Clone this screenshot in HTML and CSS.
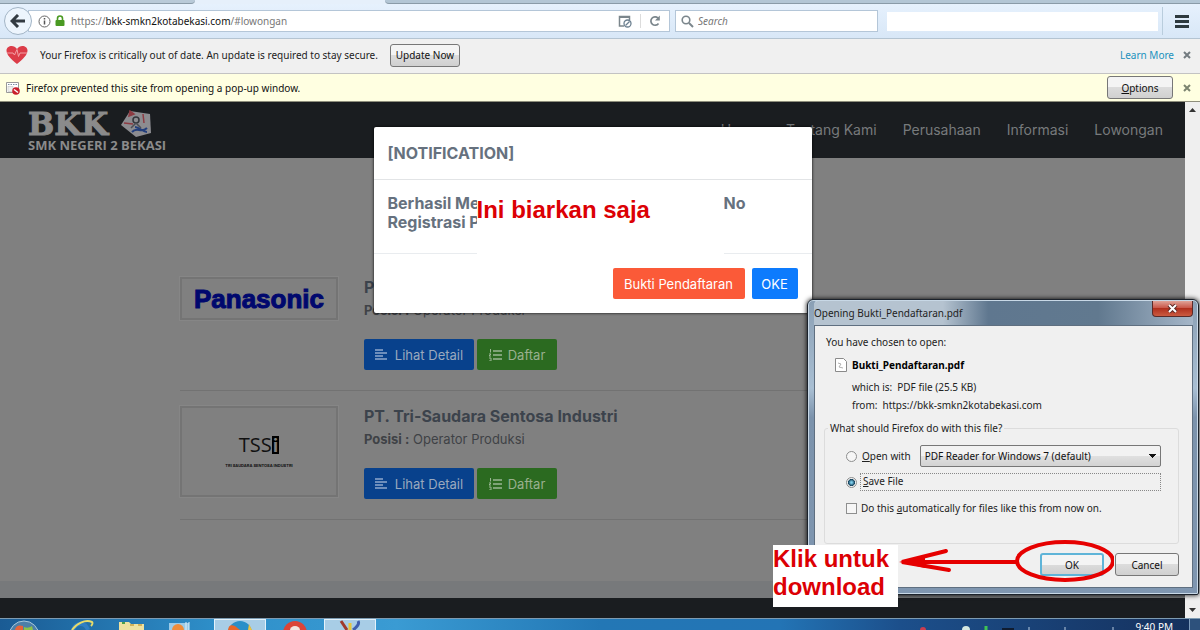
FILE: index.html
```
<!DOCTYPE html>
<html lang="id">
<head>
  <meta charset="UTF-8">
  <title>BKK SMK Negeri 2 Bekasi - Lowongan</title>
  <link rel="stylesheet" href="styles.css">
</head>
<body>
  <div class="tab-strip">
    <div class="tab-left"></div>
    <div class="tab-right"></div>
  </div>

  <header class="toolbar">
    <button class="back-btn" aria-label="Back">
      <svg width="16" height="14" viewBox="0 0 16 14"><path d="M8 1L2 7l6 6M2.500 7H15" fill="none" stroke="#333b42" stroke-width="3"/></svg>
    </button>
    <div class="url-bar">
      <svg width="13" height="13" viewBox="0 0 13 13"><circle cx="6.500" cy="6.500" r="5.500" fill="none" stroke="#666" stroke-width="1"/><path d="M6.500 5.500v4M6.500 3v1.500" stroke="#555" stroke-width="1.500"/></svg>
      <svg width="10" height="12" viewBox="0 0 10 12"><path d="M2.500 6V3.500a2.500 2.500 0 0 1 5 0V6" fill="none" stroke="#4a9a22" stroke-width="1.600"/><rect x="0.500" y="5" width="9" height="6" rx="1" fill="#4a9a22"/></svg>
      <span class="url">https://<b>bkk-smkn2kotabekasi.com</b>/#lowongan</span>
      <svg width="14" height="13" viewBox="0 0 14 13"><path d="M6 11H1.500V1.500h10V5" fill="none" stroke="#7b868c" stroke-width="1.500"/><path d="M1 2h11" stroke="#7b868c" stroke-width="2"/><circle cx="9.500" cy="8.500" r="3.500" fill="#fff" stroke="#6c8090" stroke-width="1.300"/><path d="M7.500 10.500l4-4" stroke="#6c8090" stroke-width="1.200"/></svg>
      <span class="divider"></span>
      <svg width="12" height="12" viewBox="0 0 12 12"><path d="M9.500 8.500A4.200 4.200 0 1 1 9 3" fill="none" stroke="#7b868c" stroke-width="1.700"/><path d="M10.800 0.500v5H6z" fill="#7b868c"/></svg>
    </div>
    <div class="search-bar">
      <svg width="13" height="13" viewBox="0 0 13 13"><circle cx="5" cy="5" r="3.800" fill="none" stroke="#7b868c" stroke-width="1.600"/><path d="M8 8l4 4" stroke="#7b868c" stroke-width="2"/></svg>
      <input type="search" placeholder="Search" aria-label="Search">
    </div>
    <div class="toolbar-blank"></div>
    <button class="menu-btn" aria-label="Menu"><span></span><span></span><span></span></button>
  </header>

  <div class="notice notice-update">
    <svg width="22" height="20" viewBox="0 0 22 20"><path d="M11 19C5 14 0.500 10 0.500 5.500 0.500 0.500 8 -1 11 4c3-5 10.500-3.500 10.500 1.500C21.500 10 17 14 11 19z" fill="#dc3c48"/><path d="M1 8h6l1.500 2L11 4.500l1.500 7L14 8h7" fill="none" stroke="#f3a0a5" stroke-width="1"/></svg>
    <span>Your Firefox is critically out of date. An update is required to stay secure.</span>
    <button class="win-btn">Update Now</button>
    <a class="learn-more" href="#">Learn More</a>
    <button class="close-btn" aria-label="Close"><svg width="8" height="8" viewBox="0 0 8 8"><path d="M1 1l6 6M7 1L1 7" stroke="#737b80" stroke-width="2"/></svg></button>
  </div>

  <div class="notice notice-popup">
    <svg width="14" height="14" viewBox="0 0 14 14"><path d="M0.500 1.500h12v10h-12z" fill="#fff" stroke="#999"/><path d="M2 3.500h9" stroke="#7a8da0" stroke-dasharray="1.500 1"/><rect x="2" y="5.500" width="5" height="5" fill="#eee" stroke="#bbb" stroke-width="0.500"/><circle cx="10" cy="10" r="3.800" fill="#c91f2c"/><path d="M8 8.500l4 3" stroke="#fff" stroke-width="1.400"/></svg>
    <span>Firefox prevented this site from opening a pop-up window.</span>
    <button class="win-btn options-btn"><u>O</u>ptions</button>
    <button class="close-btn" aria-label="Close"><svg width="8" height="8" viewBox="0 0 8 8"><path d="M1 1l6 6M7 1L1 7" stroke="#7c8470" stroke-width="2"/></svg></button>
  </div>

  <div class="viewport">
    <main class="page">
      <nav class="navbar">
        <a class="logo" href="#">
          <span class="logo-top">
            <span class="logo-name">BKK</span>
            <svg width="32" height="28" viewBox="0 0 32 28"><path d="M10 1l20 3 1 19-15 4L1 15z" fill="#8c8c90"/><path d="M10 1l4 3-5 2zM4 13l9 1" fill="#8d3b42" stroke="#8d3b42" stroke-width="1.500"/><path d="M23 4l1 9" stroke="#8d3b42" stroke-width="1.500"/><circle cx="16" cy="10" r="3" fill="none" stroke="#33363b" stroke-width="1.500"/><path d="M11 18l5-5 5 5" fill="none" stroke="#4b4e54" stroke-width="1.500"/><path d="M12 22c5-6 9 2 15-4M15 17c4 0 8 5 12 5" fill="none" stroke="#233f7c" stroke-width="2"/></svg>
          </span>
          <span class="logo-sub">SMK NEGERI 2 BEKASI</span>
        </a>
        <div class="nav-links">
          <a href="#">Home</a>
          <a href="#">Tentang Kami</a>
          <a href="#">Perusahaan</a>
          <a href="#">Informasi</a>
          <a href="#">Lowongan</a>
        </div>
      </nav>

      <section class="jobs">
        <article class="job">
          <div class="thumb"><span class="panasonic">Panasonic</span></div>
          <div class="job-info">
            <h2>PT. Panasonic</h2>
            <p><b>Posisi :</b> Operator Produksi</p>
            <div class="job-actions">
              <button class="btn btn-detail"><svg width="12" height="11" viewBox="0 0 12 11"><path d="M0 1h8M0 4h12M0 7h8M0 10h12" stroke="#8fa8cb" stroke-width="1.300"/></svg>Lihat Detail</button>
              <button class="btn btn-daftar"><svg width="13" height="12" viewBox="0 0 13 12"><path d="M4 2h9M4 6h9M4 10h9" stroke="#9bb794" stroke-width="1.400"/><path d="M1.500 0v3.500M0 5h2L0 7h2M0 9h2v3H0" fill="none" stroke="#9bb794"/></svg>Daftar</button>
            </div>
          </div>
        </article>
        <article class="job">
          <div class="thumb thumb-tall">
            <span class="tssi">TSS<i>i</i></span>
            <span class="tssi-sub">TRI SAUDARA SENTOSA INDUSTRI</span>
          </div>
          <div class="job-info">
            <h2>PT. Tri-Saudara Sentosa Industri</h2>
            <p><b>Posisi :</b> Operator Produksi</p>
            <div class="job-actions">
              <button class="btn btn-detail"><svg width="12" height="11" viewBox="0 0 12 11"><path d="M0 1h8M0 4h12M0 7h8M0 10h12" stroke="#8fa8cb" stroke-width="1.300"/></svg>Lihat Detail</button>
              <button class="btn btn-daftar"><svg width="13" height="12" viewBox="0 0 13 12"><path d="M4 2h9M4 6h9M4 10h9" stroke="#9bb794" stroke-width="1.400"/><path d="M1.500 0v3.500M0 5h2L0 7h2M0 9h2v3H0" fill="none" stroke="#9bb794"/></svg>Daftar</button>
            </div>
          </div>
        </article>
      </section>

      <div class="page-band"></div>
      <footer class="page-footer"></footer>

      <div class="modal" role="dialog" aria-label="Notification">
        <div class="modal-header">[NOTIFICATION]</div>
        <div class="modal-body">
          <span>Berhasil Me<br>Registrasi P</span>
          <span>No</span>
        </div>
        <div class="modal-footer">
          <button class="btn btn-bukti">Bukti Pendaftaran</button>
          <button class="btn btn-oke">OKE</button>
        </div>
        <div class="note note-modal">Ini biarkan saja</div>
      </div>
    </main>
    <div class="scrollbar">
      <svg width="7" height="4" viewBox="0 0 7 4"><path d="M0 4l3.500-4L7 4z" fill="#333"/></svg>
      <svg width="7" height="4" viewBox="0 0 7 4"><path d="M0 0l3.500 4L7 0z" fill="#333"/></svg>
    </div>
  </div>

  <div class="taskbar">
    <svg class="task-icon start" width="32" height="10" viewBox="0 0 32 10"><circle cx="16" cy="16" r="15" fill="#4d7fa8" stroke="#a9c9dd"/><path d="M7 10c1-5 5-5 8-4v4z" fill="#e8633a"/><path d="M16 7c3 1 5 1 8-1l1 4h-9z" fill="#8dc24a"/></svg>
    <svg class="task-icon" width="28" height="10" viewBox="0 0 28 10"><path d="M5 10C7 3 17 1 20 10" fill="none" stroke="#2f7fc4" stroke-width="4"/><path d="M4 10C8 4 17-1 24 2c1 1 0 3-1 4" fill="none" stroke="#e8dc6a" stroke-width="2"/></svg>
    <svg class="task-icon" width="28" height="9" viewBox="0 0 28 9"><path d="M1 1h10l2 2h13v6H1z" fill="#eee2a0"/><path d="M4 2h3" stroke="#4da04a" stroke-width="2"/><path d="M12 4h4M20 4h4" stroke="#d2b25a" stroke-width="2"/></svg>
    <svg class="task-icon" width="24" height="8" viewBox="0 0 24 8"><path d="M1 1h20v7H1z" fill="#9ccbe8"/><circle cx="10" cy="8" r="6" fill="#ef8c3a"/><path d="M18 0v8M21 0v8" stroke="#dff0fa"/></svg>
    <span class="task-tile"><svg width="26" height="9" viewBox="0 0 26 9"><circle cx="13" cy="12" r="12" fill="#2a8fc8"/><path d="M1 9C2 3 5 4 8 5l5 4z" fill="#e8662a"/><path d="M22 3l3 6h-4z" fill="#f0c23c"/></svg></span>
    <svg class="task-icon chrome" width="26" height="9" viewBox="0 0 26 9"><circle cx="13" cy="12" r="12" fill="#dc4438"/><path d="M8 9a5 4 0 0 1 10 0z" fill="#f3e5e2"/></svg>
    <span class="task-tile"><svg width="22" height="10" viewBox="0 0 22 10"><path d="M2 1l6 9" stroke="#a03a2c" stroke-width="3"/><path d="M11 3v7" stroke="#e8c53c" stroke-width="3"/><path d="M19 1c2 3-1 6-5 9" fill="none" stroke="#3f5fae" stroke-width="3"/></svg></span>
    <div class="tray">
      <svg width="200" height="4" viewBox="0 0 200 4"><circle cx="4" cy="4" r="3" fill="#cc3d50"/><circle cx="47" cy="4" r="4" fill="#d6e8e0"/><path d="M67 0v4" stroke="#3fc454" stroke-width="3"/><path d="M83 2h12v2H83z" fill="#101c30"/><path d="M110 1v3M146 1v3M194 1v3" stroke="#b8cbe0"/></svg>
      <span class="clock">9:40 PM</span>
      <span class="show-desktop"></span>
    </div>
  </div>

  <div class="dialog" role="dialog" aria-label="Opening Bukti_Pendaftaran.pdf">
    <div class="dialog-title">
      <span>Opening Bukti_Pendaftaran.pdf</span>
      <button class="dialog-close" aria-label="Close"><svg width="11" height="9" viewBox="0 0 11 9"><path d="M2 1l7 7M9 1L2 8" stroke="#5c2a26" stroke-width="4"/><path d="M2 1l7 7M9 1L2 8" stroke="#fff" stroke-width="2"/></svg></button>
    </div>
    <form class="dialog-body">
      <p>You have chosen to open:</p>
      <div class="file">
        <svg width="12" height="14" viewBox="0 0 12 14"><path d="M0.500 0.500h8l3 3v10h-11z" fill="#fff" stroke="#8a8a8a"/><path d="M3 5l3 1-2 3 4 1" fill="none" stroke="#b0b0b0"/></svg>
        <b>Bukti_Pendaftaran.pdf</b>
      </div>
      <div class="file-row"><span>which is:</span><span>PDF file (25.5 KB)</span></div>
      <div class="file-row"><span>from:</span><span>https://bkk-smkn2kotabekasi.com</span></div>
      <fieldset>
        <legend>What should Firefox do with this file?</legend>
        <div class="option">
          <input type="radio" name="action" id="open-with">
          <label for="open-with"><u>O</u>pen with</label>
          <select aria-label="Application"><option>PDF Reader for Windows 7 (default)</option></select>
        </div>
        <div class="option">
          <input type="radio" name="action" id="save-file" checked>
          <label class="focused" for="save-file"><u>S</u>ave File</label>
        </div>
        <div class="option option-auto">
          <input type="checkbox" id="auto">
          <label for="auto">Do this <u>a</u>utomatically for files like this from now on.</label>
        </div>
      </fieldset>
      <div class="dialog-actions">
        <button type="button" class="win-btn ok-btn">OK</button>
        <button type="button" class="win-btn cancel-btn">Cancel</button>
      </div>
    </form>
    <div class="note note-download">Klik untuk download</div>
    <svg class="arrow" width="216" height="44" viewBox="0 0 216 44"><ellipse cx="167" cy="22" rx="48" ry="19" fill="none" stroke="#e60000" stroke-width="4"/><path d="M119 23H12" stroke="#e60000" stroke-width="4"/><path d="M48 12L4 23l47 8" fill="none" stroke="#e60000" stroke-width="4" stroke-linecap="round"/><path d="M1 23l26-7v13z" fill="#e60000"/></svg>
  </div>
</body>
</html>
```
FILE: styles.css
```
* {
  margin: 0;
  padding: 0;
  box-sizing: border-box;
}

body {
  height: 100vh;
  display: flex;
  flex-direction: column;
  position: relative;
  overflow: hidden;
  font-family: "Noto Sans", "Open Sans", sans-serif;
  font-size: 10px;
  color: #222;
}

button,
input,
select {
  font: inherit;
}

svg {
  flex: none;
}

/* browser chrome */
.tab-strip {
  flex: none;
  height: 4px;
  display: flex;
  justify-content: space-between;
  background: #e6f0fb;
}

.tab-left {
  width: 195px;
  background: #b9cad8;
  border-bottom: 1px solid #8a9ba8;
  border-bottom-right-radius: 4px;
}

.tab-right {
  width: calc(100% - 385px);
  background: #b3c6d5;
  border-bottom: 1px solid #8a9ba8;
  border-bottom-left-radius: 4px;
}

.toolbar {
  flex: none;
  height: 35px;
  display: flex;
  align-items: center;
  padding-left: 4px;
  background: linear-gradient(#e6f1fd, #d8e7f7);
  border-bottom: 1px solid #b4c4d2;
}

.back-btn {
  flex: none;
  width: 28px;
  height: 28px;
  display: flex;
  align-items: center;
  justify-content: center;
  background: #edf5fd;
  border: 1px solid #a3b5c6;
  border-radius: 50%;
  z-index: 1;
}

.url-bar,
.search-bar {
  height: 22px;
  display: flex;
  align-items: center;
  background: #fff;
  border: 1px solid #b4c6d8;
}

.url-bar {
  flex: 1;
  gap: 4px;
  margin-left: -4px;
  padding: 0 8px 0 9px;
}

.url {
  flex: 1;
  margin-left: 2px;
  color: #777;
}

.url b {
  font-weight: normal;
  color: #111;
}

.divider {
  width: 1px;
  height: 14px;
  margin: 0 4px;
  background: #dcdcdc;
}

.search-bar {
  width: 203px;
  margin-left: 5px;
  padding-left: 5px;
  gap: 4px;
}

.search-bar input {
  width: 100%;
  border: none;
  background: none;
}

.search-bar input::placeholder {
  color: #777;
  font-style: italic;
}

.toolbar-blank {
  width: 271px;
  height: 19px;
  margin-left: 9px;
  background: #fff;
}

.menu-btn {
  width: 38px;
  height: 28px;
  margin-left: 4px;
  display: flex;
  flex-direction: column;
  align-items: center;
  justify-content: center;
  gap: 2px;
  background: none;
  border: none;
  border-left: 1px solid #b9cddd;
}

.menu-btn span {
  width: 14px;
  height: 3px;
  background: #2e3a3f;
}

.notice {
  flex: none;
  display: flex;
  align-items: center;
  padding: 0 9px 0 6px;
}

.notice-update {
  height: 35px;
  gap: 12px;
  padding-bottom: 2px;
  background: #f0f0f0;
  border-bottom: 1px solid #c3c3c3;
}

.notice-popup {
  height: 28px;
  gap: 6px;
  background: #ffffe1;
  border-bottom: 1px solid #8e8e7c;
  color: #111;
}

.win-btn {
  height: 23px;
  background: linear-gradient(#f4f4f4 50%, #dcdcdc 50%, #d0d0d0);
  border: 1px solid #777;
  border-radius: 3px;
  color: #111;
}

.notice-update .win-btn {
  width: 70px;
}

.options-btn {
  width: 66px;
  margin-left: auto;
}

.learn-more {
  margin-left: auto;
  color: #2190bd;
  text-decoration: none;
}

.close-btn {
  width: 8px;
  height: 20px;
  display: flex;
  align-items: center;
  background: none;
  border: none;
}

.notice-update .close-btn {
  margin-left: -3px;
}

.notice-popup .close-btn {
  margin-left: 4px;
}

/* web page */
.viewport {
  flex: 1;
  min-height: 0;
  display: flex;
}

.page {
  flex: 1;
  display: flex;
  flex-direction: column;
  position: relative;
  background: #808080;
  font-family: Inter, "Open Sans", sans-serif;
  font-size: 13px;
}

.navbar {
  height: 56px;
  display: flex;
  align-items: center;
  justify-content: space-between;
  padding: 0 22px 0 28px;
  background: #1a1d20;
}

.logo {
  display: flex;
  flex-direction: column;
  padding-top: 2px;
  color: #8b8b8b;
  text-decoration: none;
}

.logo-top {
  display: flex;
  align-items: center;
  gap: 12px;
  height: 28px;
}

.logo-name {
  font-family: "DejaVu Serif", serif;
  font-size: 31px;
  line-height: 28px;
  font-weight: bold;
  -webkit-text-stroke: 1px #8b8b8b;
}

.logo-sub {
  font-family: "Open Sans", sans-serif;
  font-size: 13px;
  line-height: 14px;
  font-weight: bold;
}

.nav-links {
  display: flex;
  gap: 26px;
  padding-bottom: 2px;
}

.nav-links a {
  color: #777a7c;
  font-size: 14px;
  text-decoration: none;
}

.jobs {
  flex: 1;
  padding: 104px 180px 0;
}

.job {
  display: flex;
  align-items: flex-start;
  gap: 26px;
  height: 129px;
  padding-top: 15px;
  border-bottom: 1px solid #727272;
}

.thumb {
  width: 158px;
  height: 43px;
  display: flex;
  flex-direction: column;
  align-items: center;
  justify-content: center;
  border: 2px solid #747474;
  outline: 1px solid #868686;
}

.thumb-tall {
  height: 91px;
}

.panasonic {
  font-family: "Liberation Sans", Arial, sans-serif;
  font-size: 26px;
  line-height: 30px;
  font-weight: bold;
  color: #00086e;
  -webkit-text-stroke: 1px #00086e;
}

.tssi {
  display: flex;
  align-items: center;
  font-family: "Open Sans", sans-serif;
  font-size: 20px;
  line-height: 20px;
  color: #111;
}

.tssi i {
  padding: 0 1px;
  background: #000;
  color: #808080;
  font-style: normal;
  font-weight: bold;
  font-size: 18px;
  line-height: 18px;
}

.tssi-sub {
  margin-top: 8px;
  font-size: 4px;
  line-height: 6px;
  font-weight: bold;
  color: #111;
}

.job-info h2 {
  font-size: 16px;
  line-height: 20px;
  font-weight: 700;
  color: #3c434c;
}

.job-info p {
  margin: 4px 0 20px;
  line-height: 18px;
  color: #3f4246;
}

.job-actions {
  display: flex;
  gap: 3px;
}

.btn {
  height: 31px;
  display: flex;
  align-items: center;
  justify-content: center;
  border: none;
  border-radius: 2px;
  color: #fff;
}

.btn-detail {
  width: 110px;
  gap: 8px;
  background: #08418c;
  color: #9aa9be;
}

.btn-daftar {
  width: 80px;
  gap: 6px;
  background: #2b6a20;
  color: #9ab08f;
}

.page-band {
  height: 17px;
  background: #77797b;
}

.page-footer {
  height: 20px;
  background: #1a1d20;
}

.modal {
  position: absolute;
  top: 25px;
  left: 0;
  right: 0;
  margin: 0 auto;
  width: 438px;
  background: #fff;
  border-radius: 2px;
  box-shadow: 0 0 3px #000;
  color: #66717e;
  font-size: 16px;
  font-weight: 700;
}

.modal-header {
  padding: 16px 14px;
  line-height: 20px;
  border-bottom: 1px solid #e2e4e6;
}

.modal-body {
  display: flex;
  justify-content: space-between;
  height: 74px;
  padding: 14px 66px 0 14px;
  line-height: 19px;
  border-bottom: 1px solid #e9ecef;
}

.modal-footer {
  display: flex;
  justify-content: flex-end;
  gap: 7px;
  padding: 14px;
}

.modal-footer .btn {
  font-size: 13px;
  font-weight: 400;
}

.btn-bukti {
  width: 132px;
  background: #fb5a38;
}

.btn-oke {
  width: 46px;
  background: #0d7bfd;
}

.note {
  position: absolute;
  background: #fff;
  color: #dc0004;
  font-family: "Liberation Sans", Arial, sans-serif;
  font-weight: bold;
  font-size: 24px;
  line-height: 28px;
}

.note-modal {
  left: 103px;
  top: 58px;
  width: 247px;
  height: 74px;
  padding-top: 11px;
}

.scrollbar {
  width: 15px;
  display: flex;
  flex-direction: column;
  align-items: center;
  justify-content: space-between;
  padding: 6px 0;
  background: #efefef;
}

/* taskbar */
.taskbar {
  flex: none;
  height: 12px;
  display: flex;
  align-items: flex-end;
  overflow: hidden;
  background: linear-gradient(90deg, #1a5b94, #2e8fc9 18%, #3a9bd3 33%, #2377b5 50%, #2374b5 65%, #1c4f8b 75%, #15305c);
  border-top: 1px solid #7d9bb2;
}

.task-icon {
  margin-right: 22px;
}

.start {
  margin: 0 28px 0 8px;
}

.task-tile {
  width: 52px;
  height: 11px;
  display: flex;
  align-items: flex-end;
  justify-content: center;
  background: #a8cde6;
  border: 1px solid #e3f2fb;
  border-bottom: none;
}

.chrome {
  margin: 0 16px;
}

.tray {
  margin-left: auto;
  display: flex;
  align-items: flex-end;
  gap: 16px;
  height: 11px;
}

.clock {
  height: 8px;
  line-height: 10px;
  color: #fff;
}

.show-desktop {
  width: 11px;
  height: 11px;
  background: #2d517c;
  border-left: 1px solid #7f9cbc;
}

/* download dialog */
.dialog {
  position: absolute;
  right: 1px;
  bottom: 35px;
  width: 392px;
  padding: 0 5px 6px 6px;
  background: linear-gradient(#8a9fb4, #a9bfd3 30%, #7c93ac 40%, #7f96b0);
  border: 1px solid #1b222b;
  border-radius: 6px 6px 2px 2px;
  box-shadow: inset 0 0 0 1px #c8d8e6, 0 0 5px #000;
  color: #222;
}

.dialog-title {
  height: 25px;
  display: flex;
  align-items: center;
  justify-content: space-between;
  background: linear-gradient(90deg, #b5c3d0 34%, #5f778f 46%, #61798f 75%, #a5b6c8);
  border-top: 1px solid #c8d8e6;
  border-radius: 5px 5px 0 0;
}

.dialog-close {
  align-self: flex-start;
  width: 41px;
  height: 16px;
  display: flex;
  align-items: center;
  justify-content: center;
  background: linear-gradient(#e0a398, #c9584a 45%, #b0301e 50%, #cb5b41);
  border: 1px solid #5a2a28;
  border-top: none;
  border-radius: 0 0 4px 4px;
}

.dialog-body {
  height: 263px;
  padding: 8px 13px 0 9px;
  background: #f0f0f0;
  border: 1px solid #5f6f80;
}

.dialog-body p {
  line-height: 16px;
  padding-left: 2px;
}

.file {
  display: flex;
  align-items: center;
  gap: 5px;
  margin: 6px 0 4px 11px;
  line-height: 18px;
  color: #000;
}

.file-row {
  display: flex;
  gap: 5px;
  padding-left: 28px;
  line-height: 18px;
}

.dialog-body fieldset {
  height: 124px;
  margin-top: 6px;
  padding: 7px 17px 0 21px;
  border: 1px solid #dcdcdc;
  border-radius: 3px;
}

.dialog-body legend {
  margin-left: -18px;
  padding: 0 2px;
  line-height: 16px;
}

.option {
  display: flex;
  align-items: center;
  gap: 5px;
  height: 26px;
}

.option-auto {
  gap: 4px;
}

.option input {
  appearance: none;
  flex: none;
  width: 11px;
  height: 11px;
  background: #f6f6f6;
  border: 1px solid #8e8f8f;
}

.option input[type="radio"] {
  border-radius: 50%;
}

.option input[type="radio"]:checked {
  background: radial-gradient(#7fd0ee 10%, #16445f 50%, #f0f0f0 60%);
}

.option select {
  appearance: none;
  flex: 1;
  height: 22px;
  margin-left: 4px;
  padding-left: 4px;
  background: conic-gradient(from -45deg at 50% 100%, #111 0 90deg, transparent 0) right 4px center / 7px 4px no-repeat, linear-gradient(#f2f2f2 50%, #e0e0e0 50%, #d3d3d3);
  border: 1px solid #777;
  border-radius: 2px;
  color: #111;
}

.focused {
  flex: 1;
  height: 18px;
  line-height: 15px;
  margin-left: -2px;
  padding-left: 2px;
  border: 1px dotted #888;
}

.dialog-actions {
  display: flex;
  justify-content: flex-end;
  gap: 11px;
  margin-top: 9px;
}

.ok-btn,
.cancel-btn {
  width: 64px;
}

.ok-btn {
  border: 2px solid #5fb4d8;
}

.note-download {
  left: -35px;
  bottom: -13px;
  width: 125px;
  height: 62px;
}

.arrow {
  position: absolute;
  right: 84px;
  bottom: 11px;
}
```
